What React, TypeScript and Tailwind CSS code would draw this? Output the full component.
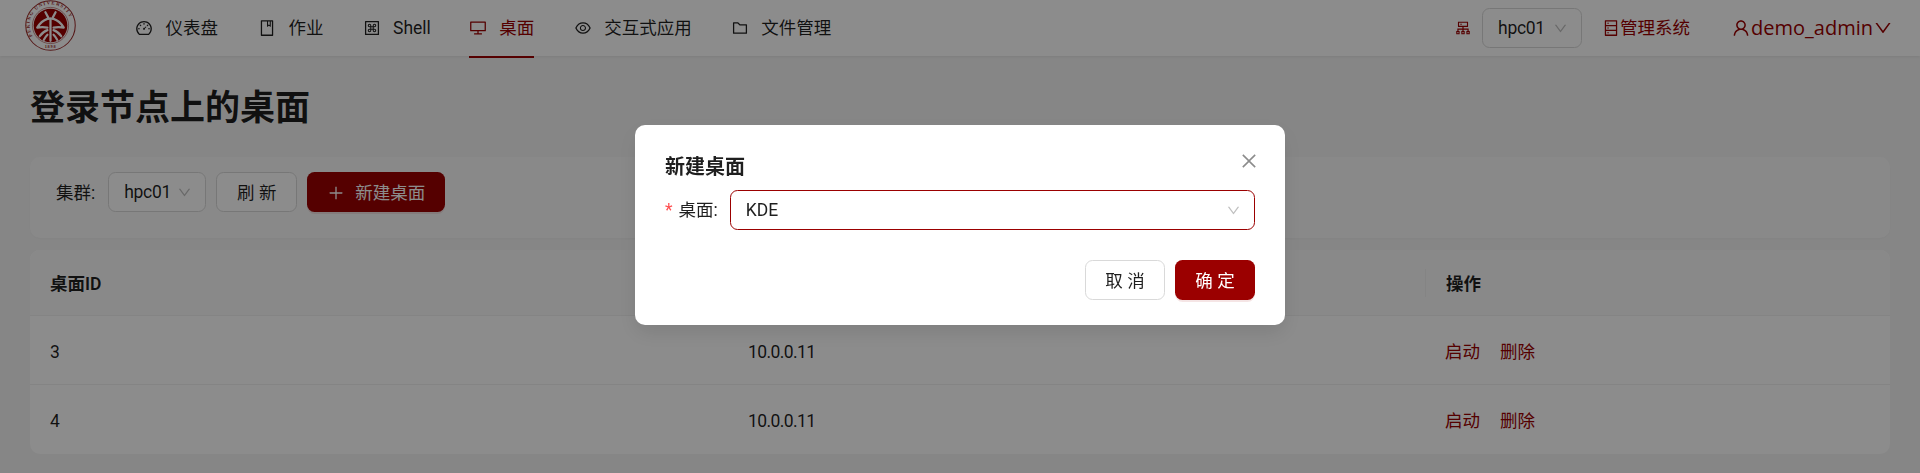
import {
  AiOutlineBook,
  AiOutlineClose,
  AiOutlineCluster,
  AiOutlineDashboard,
  AiOutlineDatabase,
  AiOutlineDesktop,
  AiOutlineDown,
  AiOutlineEye,
  AiOutlineFolder,
  AiOutlineMacCommand,
  AiOutlinePlus,
  AiOutlineUser,
} from "react-icons/ai";
import type { IconType } from "react-icons";

const font = "font-['Roboto','Noto_Sans_CJK_SC',sans-serif]";

const navItems: { icon: IconType; label: string; active?: boolean; ml: string }[] = [
  { icon: AiOutlineDashboard, label: "仪表盘", ml: "ml-0" },
  { icon: AiOutlineBook, label: "作业", ml: "ml-[40px]" },
  { icon: AiOutlineMacCommand, label: "Shell", ml: "ml-[39px]" },
  { icon: AiOutlineDesktop, label: "桌面", active: true, ml: "ml-[38px]" },
  { icon: AiOutlineEye, label: "交互式应用", ml: "ml-[39.5px]" },
  { icon: AiOutlineFolder, label: "文件管理", ml: "ml-[39px]" },
];

function Logo() {
  return (
    <svg viewBox="0 0 100 100" className="h-[51px] w-[51px]" aria-hidden="true">
      <circle cx="50" cy="50" r="48.5" fill="#fff" stroke="#9b2a2a" strokeWidth="2" />
      <circle cx="50" cy="50" r="33" fill="#9b0000" />
      <circle cx="50" cy="50" r="35.5" fill="none" stroke="#9b2a2a" strokeWidth="1" />
      <defs>
        <path id="ring" d="M 15 71 A 41 41 0 1 1 85 71" />
      </defs>
      <text fontSize="9.5" fontWeight="700" fill="#9b2a2a" letterSpacing="2.2" fontFamily="Liberation Serif, serif">
        <textPath href="#ring">PEKING UNIVERSITY</textPath>
      </text>
      <text x="50" y="95" textAnchor="middle" fontSize="8.5" fontWeight="700" fill="#9b2a2a" letterSpacing="1.5" fontFamily="Liberation Serif, serif">
        1898
      </text>
      <g fill="none" stroke="#fff" strokeWidth="4.4" strokeLinecap="round" strokeLinejoin="round">
        <path d="M40 24 L47 37" />
        <path d="M60 24 L53 37" />
        <path d="M50 36 V80" />
        <path d="M44 37 Q32 41 24 54 Q34 52 44 54" />
        <path d="M56 37 Q68 41 76 54 Q66 52 56 54" />
        <path d="M44 59 Q35 62 29 71" />
        <path d="M56 59 Q65 62 71 71" />
        <path d="M44 68 Q40 72 37 78" />
        <path d="M56 68 Q60 72 63 78" />
      </g>
    </svg>
  );
}

function NavItem({ icon: Icon, label, active, ml }: (typeof navItems)[number]) {
  return (
    <div className={`relative flex h-[56px] items-center gap-[12.5px] ${ml} ${active ? "text-[#9b0000]" : "text-black/88"}`}>
      <Icon className="text-[18px]" />
      <span className="pt-[1px]">{label}</span>
      {active && <span className="absolute bottom-[-2px] left-0 right-0 h-[2px] bg-[#9b0000]" />}
    </div>
  );
}

function Select({ width, value }: { width: string; value: string }) {
  return (
    <div className={`flex h-[40px] ${width} items-center justify-between rounded-[7.5px] border border-[#d9d9d9] bg-white pl-[15px] pr-[13px]`}>
      <span className="pt-[1px] tracking-[-0.3px] text-black/88">{value}</span>
      <AiOutlineDown className="text-[15px] text-black/25" />
    </div>
  );
}

function Header() {
  return (
    <header className="flex h-[56px] items-center bg-white pl-[25px] shadow-[0_1px_3px_rgba(0,0,0,0.08)]">
      <div className="mb-[5px]">
        <Logo />
      </div>
      <nav className="ml-[59px] flex flex-1 items-center">
        {navItems.map((item) => (
          <NavItem key={item.label} {...item} />
        ))}
      </nav>
      <div className="flex items-center text-[#9b0000]">
        <AiOutlineCluster className="text-[18px]" />
        <div className="ml-[10px]">
          <Select width="w-[100px]" value="hpc01" />
        </div>
        <div className="ml-[20px] flex items-center">
          <AiOutlineDatabase className="text-[18px]" />
          <span>管理系统</span>
        </div>
        <div className="ml-[41px] flex items-center pr-[27px] text-[20px]">
          <AiOutlineUser className="text-[20px]" />
          <span className="font-['Open_Sans',sans-serif]">demo_admin</span>
          <AiOutlineDown className="text-[20px]" />
        </div>
      </div>
    </header>
  );
}

function Toolbar() {
  return (
    <div className="mt-[24px] h-[81px] rounded-[10px] bg-[#fafafa] pl-[26px] pt-[15px] shadow-[0_1px_2px_rgba(0,0,0,0.03)]">
      <div className="flex items-center">
        <span className="pt-[2px] text-black/88">集群:</span>
        <div className="ml-[13px]">
          <Select width="w-[98px]" value="hpc01" />
        </div>
        <button type="button" className="ml-[10px] h-[40px] w-[81px] rounded-[7.5px] border border-[#d9d9d9] bg-white pt-[2px] text-black/88">
          刷 新
        </button>
        <button type="button" className="ml-[10px] flex h-[40px] w-[138px] items-center justify-center gap-[10px] rounded-[7.5px] bg-[#9b0000] pt-[1px] text-white shadow-[0_2px_0_rgba(155,0,0,0.1)]">
          <AiOutlinePlus className="text-[18px]" />
          <span className="pt-[1px]">新建桌面</span>
        </button>
      </div>
    </div>
  );
}

const rows = [
  { id: "3", ip: "10.0.0.11" },
  { id: "4", ip: "10.0.0.11" },
];

function Table() {
  return (
    <div className="mt-[12px] rounded-[10px] bg-white text-black/88">
      <div className="grid h-[66px] grid-cols-[698px_697px_1fr] items-center rounded-t-[10px] border-b border-[#f0f0f0] bg-[#fafafa] font-semibold">
        <div className="pl-[20px] pt-[4px]">桌面ID</div>
        <div />
        <div className="flex h-[28px] items-center border-l border-[#f0f0f0] pl-[20px] pt-[3px]">操作</div>
      </div>
      {rows.map((row, i) => (
        <div key={row.id} className={`grid h-[69px] grid-cols-[698px_697px_1fr] items-center ${i === 0 ? "border-b border-[#f0f0f0]" : ""}`}>
          <div className="pl-[20px] pt-[4px]">{row.id}</div>
          <div className="pl-[20px] pt-[4px] tracking-[-0.6px]">{row.ip}</div>
          <div className="flex gap-[20px] pl-[20px] pt-[4px] text-[#9b0000]">
            <span>启动</span>
            <span>删除</span>
          </div>
        </div>
      ))}
    </div>
  );
}

function Modal() {
  return (
    <div className="fixed inset-0 bg-black/45">
      <div className="flex justify-center pt-[125px]">
        <div className="relative h-[200px] w-[650px] rounded-[10px] bg-white px-[30px] pt-[27px] shadow-[0_8px_20px_rgba(0,0,0,0.1)]">
          <AiOutlineClose className="absolute right-[26px] top-[26px] text-[20px] text-black/45" />
          <div className="text-[20px] font-semibold leading-[30px] text-black/88">新建桌面</div>
          <div className="mt-[8px] flex items-center">
            <span className="mr-[6px] text-[#ff4d4f]">*</span>
            <span className="pt-[1px] text-black/88">桌面:</span>
            <div className="ml-[12px] flex h-[40px] flex-1 items-center justify-between rounded-[7.5px] border border-[#9b0000] pl-[15px] pr-[13px]">
              <span className="pt-[1px] text-black/88">KDE</span>
              <AiOutlineDown className="text-[15px] text-black/25" />
            </div>
          </div>
          <div className="mt-[30px] flex justify-end gap-[10px]">
            <button type="button" className="h-[40px] w-[80px] rounded-[7.5px] border border-[#d9d9d9] bg-white pt-[2px] text-black/88">
              取 消
            </button>
            <button type="button" className="h-[40px] w-[80px] rounded-[7.5px] bg-[#9b0000] pt-[2px] text-white shadow-[0_2px_0_rgba(155,0,0,0.1)]">
              确 定
            </button>
          </div>
        </div>
      </div>
    </div>
  );
}

export default function App() {
  return (
    <div className={`h-[473px] overflow-hidden bg-[#f5f5f5] text-[17.5px] ${font}`}>
      <Header />
      <main className="px-[30px]">
        <h1 className="mt-[29px] text-[35px] font-bold leading-[48px] text-black/88">登录节点上的桌面</h1>
        <Toolbar />
        <Table />
      </main>
      <Modal />
    </div>
  );
}
